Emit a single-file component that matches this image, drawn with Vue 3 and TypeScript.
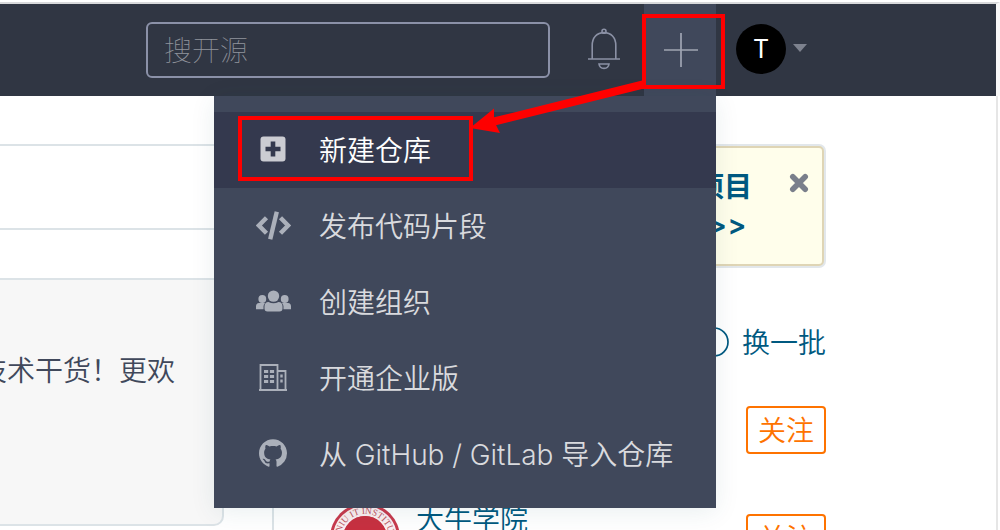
<script setup lang="ts">
interface MenuItem {
  icon: 'plus' | 'code' | 'group' | 'building' | 'github'
  label: string
  active?: boolean
}

const items: MenuItem[] = [
  { icon: 'plus', label: '新建仓库', active: true },
  { icon: 'code', label: '发布代码片段' },
  { icon: 'group', label: '创建组织' },
  { icon: 'building', label: '开通企业版' },
  { icon: 'github', label: '从 GitHub / GitLab 导入仓库' },
]
</script>

<template>
  <div class="page">
    <header class="navbar">
      <div class="search">搜开源</div>
      <svg class="bell" width="34" height="42" viewBox="0 0 34 42" fill="none" stroke="#8b91a5" stroke-width="1.6">
        <path d="M1 31H33M5.200 30.500V17.500C5.200 9.500 10 4.600 17 4.600S28.800 9.500 28.800 17.500V30.500" />
        <circle cx="17" cy="3.200" r="2" />
        <path d="M12 36H22C21.600 39 19.500 40.400 17 40.400S12.400 39 12 36Z" />
      </svg>
      <div class="create">
        <svg width="34" height="34" viewBox="0 0 34 34" stroke="#a0a5b3" stroke-width="1.7">
          <path d="M0 17H34M17 0V34" />
        </svg>
      </div>
      <div class="avatar">T</div>
      <div class="caret"></div>
    </header>

    <main class="body">
      <section class="feed">
        <div class="feed-head"></div>
        <div class="feed-row"></div>
        <div class="feed-gap"></div>
        <div class="card">技术干货！更欢</div>
      </section>

      <aside class="side">
        <div class="notice">
          <div class="notice-text">
            <div>推荐项目</div>
            <div class="arrows">查看 &gt;&gt;</div>
          </div>
          <svg class="close" width="20" height="20" viewBox="0 0 20 20" stroke="#7a7f8b" stroke-width="5.600" stroke-linecap="round">
            <path d="M3.800 3.800L16.200 16.200M16.200 3.800L3.800 16.200" />
          </svg>
        </div>
        <div class="shuffle">
          <svg width="30" height="30" viewBox="0 0 30 30" fill="none" stroke="#005980" stroke-width="1.700">
            <circle cx="15" cy="15" r="14" />
          </svg>
          <span>换一批</span>
        </div>
        <div class="follow-row"><span class="follow">关注</span></div>
        <div class="follow-row second">
          <svg class="logo" width="70" height="70" viewBox="0 0 70 70">
            <defs><path id="ring" d="M10.800 35A24.200 24.200 0 0 1 59.200 35" /></defs>
            <circle cx="35" cy="35" r="35" fill="#c83a4d" />
            <circle cx="35" cy="35" r="27" fill="none" stroke="#faeef0" stroke-width="10" />
            <circle cx="35" cy="35" r="22" fill="#c83040" />
            <text class="ring-text"><textPath href="#ring" startOffset="50%" text-anchor="middle">NIU IT INSTITU</textPath></text>
          </svg>
          <span class="name">大牛学院</span>
          <span class="follow">关注</span>
        </div>
      </aside>
    </main>

    <nav class="menu">
      <div v-for="item in items" :key="item.label" class="item" :class="{ active: item.active }">
        <span class="icon">
          <svg v-if="item.icon === 'plus'" class="wide" width="26" height="26" viewBox="0 0 26 26">
            <rect x=".5" y=".5" width="25" height="25" rx="3" fill="#cbccd2" />
            <path d="M13 5.500V20.500M5.500 13H20.500" stroke="#34394e" stroke-width="4.600" />
          </svg>
          <svg v-else-if="item.icon === 'code'" width="36" height="30" viewBox="0 0 36 30" fill="none" stroke="#abb0ba" stroke-width="4.400">
            <path d="M10.500 7.700L2.900 15.500L10.500 23.300M24.500 7.700L32.100 15.500L24.500 23.300" />
            <path d="M20.800 1.800L14.200 29.200" />
          </svg>
          <svg v-else-if="item.icon === 'group'" width="36" height="24" viewBox="0.5 -0.5 36 24" fill="#abb0ba">
            <circle cx="6.800" cy="9.500" r="3.900" />
            <circle cx="29.200" cy="9.500" r="3.900" />
            <path d="M.5 19.800V17Q.5 13.500 3.500 13.500H9.500Q8 15 8 17V19.800ZM35.500 19.800V17Q35.500 13.500 32.500 13.500H26.500Q28 15 28 17V19.800Z" />
            <circle cx="18" cy="6.600" r="5.700" />
            <path d="M9 19V17Q9 12.500 13 12.500Q18 15 23 12.500Q27 12.500 27 17V19Q27 22 24 22H12Q9 22 9 19Z" />
          </svg>
          <svg v-else-if="item.icon === 'building'" class="wide" width="28" height="28" viewBox="0 -0.5 28 28" fill="none" stroke="#abb0ba">
            <path d="M0 26.500H28M1.500 26V1.500H18.500V26M18.500 7.500H26.500V26" stroke-width="1.800" />
            <path d="M5 8H9.200M10.900 8H15.100M5 13H9.200M10.900 13H15.100M5 18H9.200M10.900 18H15.100M21.300 12.500H23.700M21.300 17.500H23.700" stroke-width="3" />
          </svg>
          <svg v-else class="wide" width="28" height="28" viewBox="0 -0.200 16 16" fill="#abb0ba">
            <path d="M8 0C3.580 0 0 3.580 0 8c0 3.540 2.290 6.530 5.470 7.590.4.070.55-.17.55-.38 0-.19-.01-.82-.01-1.490-2.010.37-2.530-.49-2.690-.94-.09-.23-.48-.94-.82-1.130-.28-.15-.68-.52-.01-.53.63-.01 1.080.58 1.230.82.72 1.210 1.870.87 2.330.66.070-.52.28-.87.51-1.070-1.780-.2-3.640-.89-3.640-3.950 0-.87.31-1.590.82-2.150-.08-.2-.36-1.020.08-2.120 0 0 .67-.21 2.200.82.64-.18 1.320-.27 2-.27s1.360.09 2 .27c1.530-1.040 2.200-.82 2.200-.82.44 1.100.16 1.920.08 2.120.51.56.82 1.270.82 2.150 0 3.070-1.870 3.750-3.650 3.950.29.25.54.73.54 1.480 0 1.070-.01 1.930-.01 2.200 0 .21.15.46.55.38A8.010 8.010 0 0 0 16 8c0-4.420-3.580-8-8-8z" />
          </svg>
        </span>
        <span class="label">{{ item.label }}</span>
      </div>
    </nav>

    <svg class="marks" width="1000" height="530" viewBox="0 0 1000 530">
      <g fill="none" stroke="#fe0000" stroke-width="4">
        <rect x="644" y="16" width="79" height="71" />
        <rect x="240" y="118" width="231" height="61" />
      </g>
      <path d="M643 84.500L494 121.500" stroke="#fe0000" stroke-width="8" />
      <path d="M470 128L494 108.500L494 119L496 125L500 133Z" fill="#fe0000" />
    </svg>
  </div>
</template>

<style scoped>
.page {
  position: relative;
  box-sizing: border-box;
  width: 1000px;
  height: 530px;
  overflow: hidden;
  padding-top: 2px;
  background: #fff;
  font-family: "Inter", "Noto Sans CJK SC", sans-serif;
  font-size: 28px;
  font-weight: 350;
}
.navbar {
  display: flex;
  align-items: center;
  box-sizing: border-box;
  width: 100%;
  height: 94px;
  padding-left: 146px;
  border-top: 2px solid #d8d9db;
  border-right: 4px solid #f8f8f8;
  background: #303643;
}
.search {
  box-sizing: border-box;
  width: 404px;
  height: 56px;
  padding: 1px 0 0 16px;
  border: 2px solid #8b91a8;
  border-radius: 6px;
  color: #90949c;
  line-height: 52px;
  font-weight: 100;
}
.bell {
  margin: -2px 0 0 37px;
}
.create {
  display: flex;
  align-items: center;
  justify-content: center;
  width: 72px;
  height: 92px;
  margin-left: 23px;
  padding-left: 2px;
  box-sizing: border-box;
  background: #40485b;
}
.avatar {
  width: 50px;
  height: 50px;
  margin-left: 20px;
  margin-top: -2px;
  border-radius: 50%;
  background: #000;
  color: #fff;
  font-size: 25px;
  font-weight: 400;
  line-height: 51px;
  text-align: center;
}
.caret {
  margin: -4px 0 0 7px;
  border: 7px solid transparent;
  border-top: 8px solid #7d828e;
  border-bottom: 0;
}
.body {
  display: flex;
  height: 434px;
  width: 996px;
  border-right: 2px solid #e6e6e6;
}
.feed {
  width: 224px;
}
.feed-head {
  height: 48px;
  border-bottom: 2px solid #dce3e7;
}
.feed-row {
  height: 82px;
  border-bottom: 2px solid #dce3e7;
}
.feed-gap {
  height: 48px;
}
.card {
  display: flex;
  justify-content: flex-end;
  box-sizing: border-box;
  height: 248px;
  padding: 71px 47px 0 0;
  border: solid #dce3e7;
  border-width: 2px 2px 2px 0;
  border-radius: 0 0 10px 0;
  background: #f7f7f7;
  color: #40485b;
  line-height: 40px;
  white-space: nowrap;
}
.side {
  box-sizing: border-box;
  width: 554px;
  height: 434px;
  margin-left: 48px;
  padding: 48px 0 0 56px;
  border-left: 2px solid #dce3e7;
  color: #005980;
}
.notice {
  display: flex;
  justify-content: flex-end;
  box-sizing: border-box;
  height: 120px;
  margin: 2px 2px 0 0;
  padding: 18px 13px 0 0;
  border: 2px solid #dfd5b5;
  border-radius: 5px;
  box-shadow: 0 0 0 2px #e2e7eb;
  background: #fffeeb;
  font-weight: 600;
  line-height: 40px;
}
.notice-text {
  width: 112px;
  margin: 1px 37px 0 0;
  white-space: nowrap;
  text-align: right;
}
.arrows {
  margin-top: -2px;
  padding-right: 5px;
  letter-spacing: 0.6px;
  font-feature-settings: "calt" 0;
}
.close {
  margin-top: 7px;
}
.shuffle {
  display: flex;
  align-items: center;
  justify-content: flex-end;
  gap: 13px;
  height: 40px;
  margin-top: 56px;
}
.shuffle span {
  margin-top: -2px;
}
.follow-row {
  display: flex;
  justify-content: flex-end;
  height: 108px;
  margin-top: 44px;
}
.follow-row.second {
  margin-top: 0;
}
.follow {
  box-sizing: border-box;
  width: 80px;
  height: 48px;
  border: 2px solid #fe7300;
  border-radius: 4px;
  color: #fe7300;
  line-height: 46px;
  text-align: center;
}
.logo {
  flex: none;
  margin-top: -11px;
}
.name {
  flex: 1;
  margin: -14px 0 0 16px;
  line-height: 40px;
}
.ring-text {
  fill: #bd5560;
  font: 400 9.2px "Liberation Serif", serif;
}
.menu {
  position: absolute;
  top: 96px;
  left: 214px;
  box-sizing: border-box;
  width: 502px;
  height: 412px;
  padding-top: 16px;
  background: #40485b;
  box-shadow: 0 4px 24px rgba(0, 80, 90, 0.09);
}
.item {
  display: flex;
  align-items: center;
  box-sizing: border-box;
  height: 76px;
  padding-bottom: 2px;
  color: #d9dade;
}
.item.active {
  background: #34394e;
  color: #fff;
}
.icon {
  display: flex;
  justify-content: center;
  width: 36px;
  margin: 0 27px 0 42px;
}
.wide {
  margin-right: 2px;
}
.label {
  letter-spacing: -0.03px;
  white-space: nowrap;
}
.marks {
  position: absolute;
  inset: 0;
}
</style>

<style>
body {
  margin: 0;
  overflow: hidden;
}
</style>
